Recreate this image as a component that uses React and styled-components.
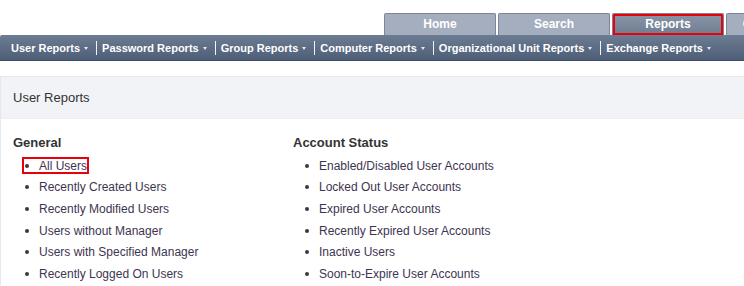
import React from "react"
import styled, { createGlobalStyle } from "styled-components"

const GlobalStyle = createGlobalStyle`
  body {
    margin: 0;
    background: #fff;
    font-family: "Liberation Sans", Arial, sans-serif;
    overflow: hidden;
  }
`

const Page = styled.div`
  width: 744px;
  height: 286px;
  overflow: hidden;
`

const TabRow = styled.div`
  display: flex;
  align-items: flex-end;
  gap: 2px;
  height: 35px;
  padding-left: 384px;
  white-space: nowrap;
`

const Tab = styled.div`
  flex: 0 0 112px;
  box-sizing: border-box;
  height: 22px;
  border: 1px solid #7d8698;
  border-bottom: none;
  border-radius: 2px 2px 0 0;
  background: ${p => (p.active ? "linear-gradient(#8a95a7, #6f7c90)" : "#a4aebe")};
  box-shadow: ${p => (p.active ? "inset 0 0 0 2px #e8000b" : "none")};
  color: #fff;
  font-size: 12px;
  font-weight: bold;
  line-height: 21px;
  text-align: center;
`

const MenuBar = styled.div`
  display: flex;
  align-items: center;
  height: 26px;
  box-sizing: border-box;
  padding-left: 11px;
  background: linear-gradient(#6c7c92, #4d5e77);
  border-bottom: 1px solid #3f4d62;
  border-radius: 2px 0 0 0;
  white-space: nowrap;
`

const MenuItem = styled.span`
  display: flex;
  align-items: center;
  color: #fff;
  font-size: 11px;
  font-weight: bold;
`

const Caret = styled.span`
  width: 0;
  height: 0;
  margin-left: 4px;
  margin-top: 1px;
  border-left: 2.5px solid transparent;
  border-right: 2.5px solid transparent;
  border-top: 3px solid #e3e7ee;
`

const Divider = styled.span`
  width: 1px;
  height: 14px;
  margin: 0 5px 0 8px;
  background: #f2f4f7;
`

const Panel = styled.div`
  margin: 15px 0 0 0;
  border-top: 1px solid #e6e8eb;
  border-left: 1px solid #e6e8eb;
`

const PanelHeader = styled.div`
  height: 41px;
  padding-left: 12px;
  display: flex;
  align-items: center;
  background: #f2f3f6;
  border-bottom: 1px solid #eceef1;
  color: #333;
  font-size: 13px;
`

const PanelBody = styled.div`
  display: grid;
  grid-template-columns: 280px 280px;
  padding: 16px 12px 0;
`

const Heading = styled.div`
  color: #333;
  font-size: 13px;
  font-weight: bold;
  line-height: 16px;
`

const List = styled.ul`
  list-style: none;
  margin: 4px 0 0;
  padding: 0;
`

const Item = styled.li`
  display: flex;
  align-items: center;
  height: 21.6px;
  padding-left: 12px;
  font-size: 12px;
  color: #3e3450;

  span {
    position: relative;
    display: flex;
    align-items: center;
  }

  ${p =>
    p.marked &&
    `
    span::after {
      content: "";
      position: absolute;
      left: -3px;
      right: -2px;
      top: -2px;
      bottom: -1px;
      border: 2px solid #e8000b;
    }
  `}
`

const Bullet = styled.i`
  width: 4px;
  height: 4px;
  margin-right: 10px;
  border-radius: 50%;
  background: #3a3a3a;
`

const menus = [
  "User Reports",
  "Password Reports",
  "Group Reports",
  "Computer Reports",
  "Organizational Unit Reports",
  "Exchange Reports",
]

const columns = [
  {
    title: "General",
    items: [
      "All Users",
      "Recently Created Users",
      "Recently Modified Users",
      "Users without Manager",
      "Users with Specified Manager",
      "Recently Logged On Users",
    ],
  },
  {
    title: "Account Status",
    items: [
      "Enabled/Disabled User Accounts",
      "Locked Out User Accounts",
      "Expired User Accounts",
      "Recently Expired User Accounts",
      "Inactive Users",
      "Soon-to-Expire User Accounts",
    ],
  },
]

export default function App() {
  return (
    <Page>
      <GlobalStyle />
      <TabRow>
        <Tab>Home</Tab>
        <Tab>Search</Tab>
        <Tab active>Reports</Tab>
        <Tab>Configuration</Tab>
      </TabRow>
      <MenuBar>
        {menus.map((m, i) => (
          <React.Fragment key={m}>
            {i > 0 && <Divider />}
            <MenuItem>
              {m}
              <Caret />
            </MenuItem>
          </React.Fragment>
        ))}
      </MenuBar>
      <Panel>
        <PanelHeader>User Reports</PanelHeader>
        <PanelBody>
          {columns.map(col => (
            <div key={col.title}>
              <Heading>{col.title}</Heading>
              <List>
                {col.items.map(it => (
                  <Item key={it} marked={it === "All Users"}>
                    <span>
                      <Bullet />
                      {it}
                    </span>
                  </Item>
                ))}
              </List>
            </div>
          ))}
        </PanelBody>
      </Panel>
    </Page>
  )
}
